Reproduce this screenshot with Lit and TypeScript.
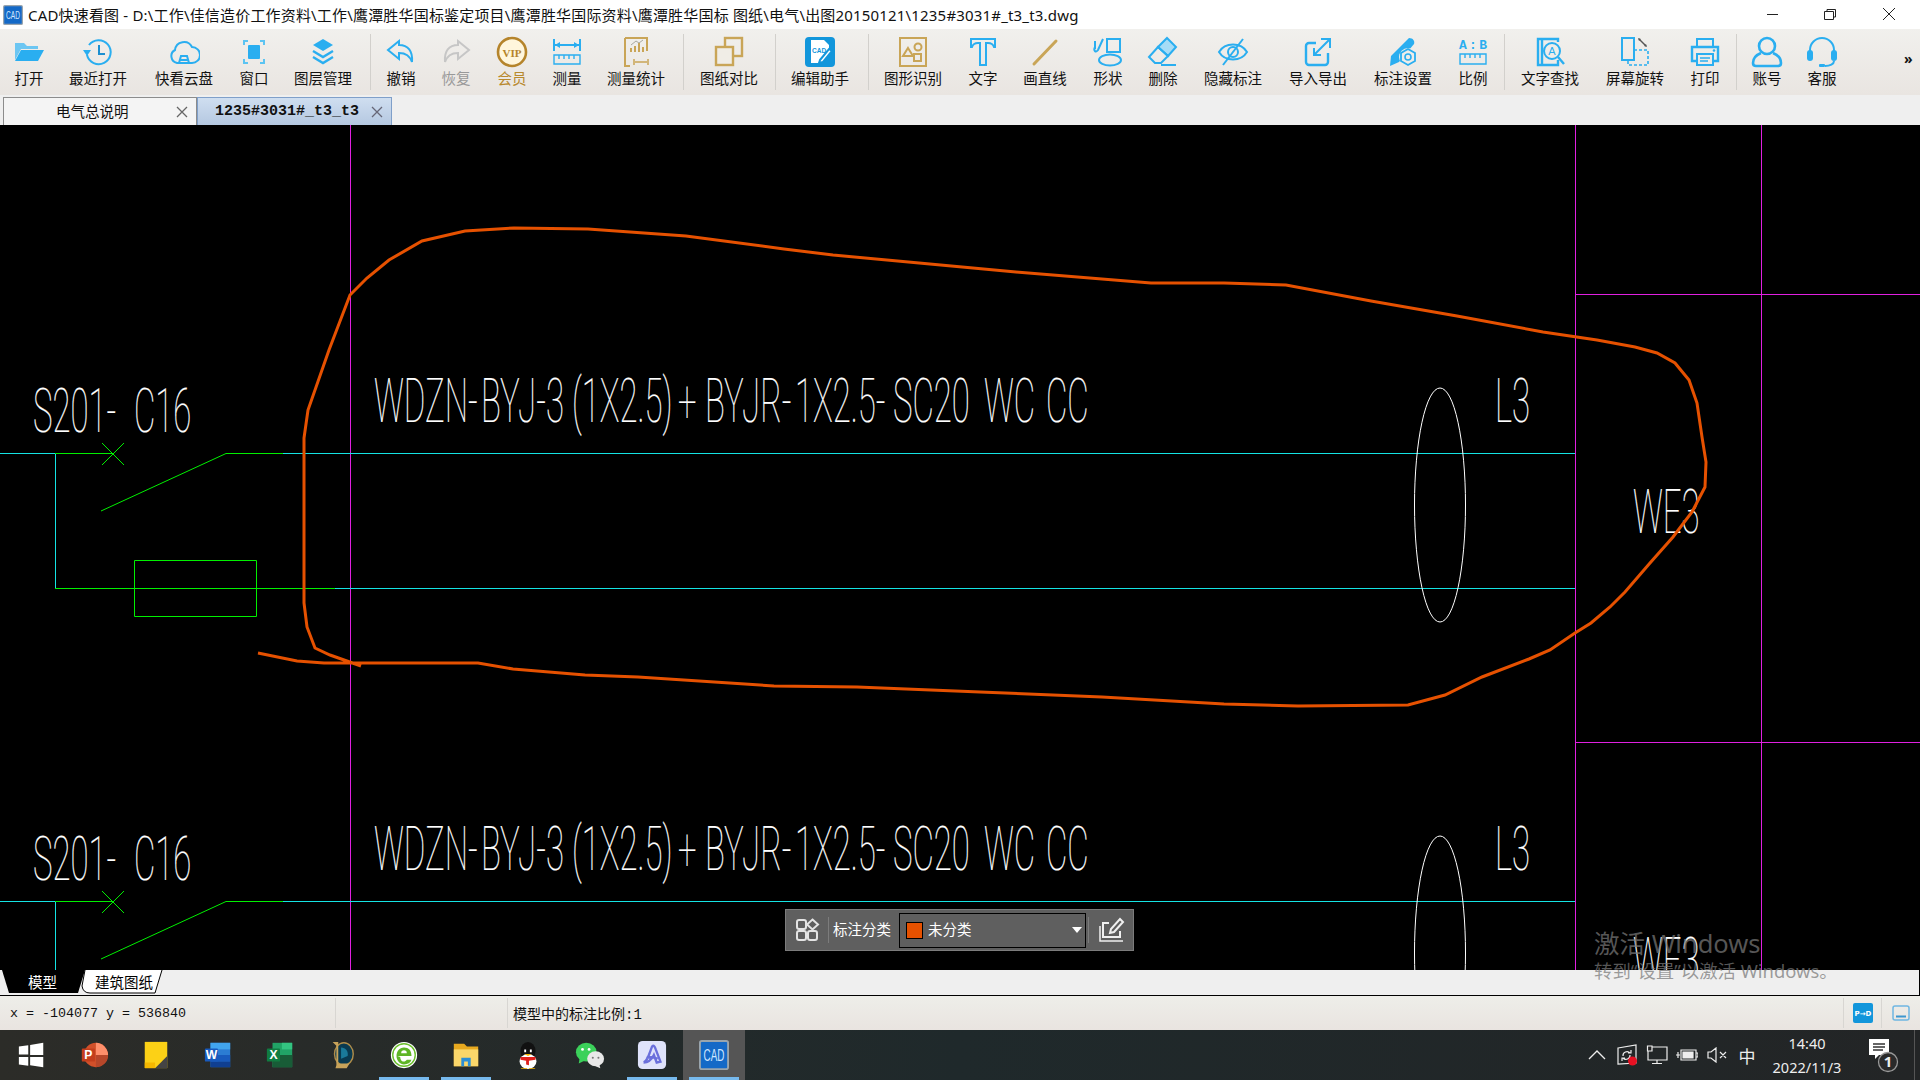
import { LitElement, html, svg, css } from 'lit';
import { customElement } from 'lit/decorators.js';

const B = '#2aaef0';
const G = '#c9a557';

const ico = (body: unknown) => html`<svg class="ico" viewBox="0 0 32 32" fill="none" stroke-width="2">${body}</svg>`;

const icons: Record<string, unknown> = {
  open: ico(svg`<path d="M2 7h9l3 3h11v3H8L2 24z" fill="#6cc6f2"/><path d="M8 14h23l-6 11H2z" fill="${B}"/>`),
  recent: ico(svg`<path d="M7 9a12 12 0 1 1-2 10" stroke="${B}"/><path d="M1 14h8l-4 6z" fill="${B}"/><path d="M17 9v9h6" stroke="#1c8fd0"/>`),
  cloud: ico(svg`<path d="M9 27a7 7 0 0 1-2-13 9 9 0 0 1 17-3 8 8 0 0 1 0 16z" stroke="${B}"/><path d="M11 27l2-7h6l2 7zM12 24h8" stroke="${B}"/>`),
  frame: ico(svg`<rect x="10" y="9" width="12" height="14" rx="1" fill="${B}"/><path d="M6 9V5h4M22 5h4v4M26 23v4h-4M10 27H6v-4" stroke="#5cc4f2"/>`),
  layers: ico(svg`<path d="M16 3l10 6-10 6-10-6z" fill="${B}"/><path d="M6 15l10 6 10-6M6 21l10 6 10-6" stroke="${B}" stroke-width="2.400"/>`),
  undo: ico(svg`<path d="M14 5L3 14l11 9v-6c7 0 11 3 13 9 1-11-4-17-13-17z" stroke="${B}"/>`),
  redo: ico(svg`<path d="M18 5l11 9-11 9v-6c-7 0-11 3-13 9-1-11 4-17 13-17z" stroke="#c6c6c6"/>`),
  vip: ico(svg`<circle cx="16" cy="16" r="14" fill="#fff6dc" stroke="#b5842b" stroke-width="2.600"/><text x="16" y="20.500" text-anchor="middle" class="vip">VIP</text>`),
  measure: ico(svg`<path d="M3 3v12M29 3v12M4 9h24" stroke="${B}"/><path d="M4 9l5-3v6zM28 9l-5-3v6z" fill="${B}"/><path d="M3 19h26v9H3zM8 19v4M13 19v4M18 19v4M23 19v4" stroke="${B}" stroke-width="1.400"/>`),
  stat: ico(svg`<path d="M5 2h22v13M5 2v28h5" stroke="${G}" stroke-width="2"/><path d="M11 16v-4M15 16v-6M19 16v-9M23 16v-5" stroke="${G}" stroke-width="2"/><path d="M11 9l5-4 3 2 4-3" stroke="#a8a8a0" stroke-width="1"/><path d="M14 23v6M28 23v6M15 26h12" stroke="${G}" stroke-width="1.500"/>`),
  compare: ico(svg`<rect x="12" y="2" width="17" height="18" stroke="${G}" stroke-width="2.400"/><rect x="3" y="11" width="17" height="18" fill="#f0ede6" stroke="${G}" stroke-width="2.400"/>`),
  helper: ico(svg`<rect x="1" y="1" width="30" height="30" rx="4" fill="#1296db"/><path d="M7 4h13l5 5v8l-8 10H7z" fill="#fff"/><text x="8" y="17" class="mini">CAD</text><path d="M16 24l9-11 3 2-9 11-4 1z" fill="#fff" stroke="#1296db"/>`),
  detect: ico(svg`<rect x="3" y="2" width="26" height="28" stroke="${G}" stroke-width="2"/><path d="M11 12l5 8H6z" stroke="${G}"/><circle cx="21" cy="11" r="3.500" stroke="${G}"/><rect x="17" y="18" width="7" height="7" stroke="${G}"/>`),
  text: ico(svg`<path d="M4 3h24v8h-1c-1-3-3-4-6-4h-2v22h-6V7h-2c-3 0-5 1-6 4H4z" stroke="${B}"/>`),
  line: ico(svg`<path d="M5 28L27 5" stroke="${G}" stroke-width="3" stroke-linecap="round"/>`),
  shape: ico(svg`<rect x="15" y="3" width="13" height="13" stroke="${B}"/><ellipse cx="18" cy="24" rx="11" ry="5.500" stroke="${B}"/><path d="M11 3l-5 11c-2 3-5 1-3-3M3 5v8" stroke="${B}"/>`),
  erase: ico(svg`<path d="M20 2l9 9-8 9-10-9z" fill="#a6dcf6" stroke="${B}"/><path d="M11 11l10 9-7 7H8l-6-6zM14 29h15" stroke="${B}"/>`),
  hide: ico(svg`<path d="M2 16c6-10 22-10 28 0-6 10-22 10-28 0z" stroke="${B}"/><circle cx="16" cy="16" r="5" stroke="${B}"/><path d="M26 3L6 29" stroke="${B}"/>`),
  io: ico(svg`<path d="M14 7H7a3 3 0 0 0-3 3v16a3 3 0 0 0 3 3h16a3 3 0 0 0 3-3v-9" stroke="${B}" stroke-width="2.400"/><path d="M19 3h9v9M28 3L13 18M12 12v7h7" stroke="${B}" stroke-width="2"/>`),
  mark: ico(svg`<path d="M22 2c4 0 6 3 5 6L12 26l-9 4 1-10z" fill="${B}"/><circle cx="21" cy="21" r="9" fill="#efede9"/><path d="M21 13l7 4v8l-7 4-7-4v-8z" stroke="${B}" stroke-width="1.800"/><circle cx="21" cy="21" r="3" stroke="${B}" stroke-width="1.600"/>`),
  ratio: ico(svg`<text x="2" y="13" textLength="28" class="ab">A:B</text><path d="M3 18h26v10H3zM8 18v4M13 18v4M18 18v4M23 18v4" stroke="${B}" stroke-width="1.400"/>`),
  find: ico(svg`<path d="M24 24v5H4V3h20v3M8 3v26" stroke="${B}" stroke-width="2.400"/><circle cx="18" cy="15" r="8" fill="#efede9" stroke="${B}"/><text x="18" y="19" text-anchor="middle" class="finda">A</text><path d="M24 21l6 7" stroke="${B}" stroke-width="2.400"/>`),
  rotate: ico(svg`<rect x="3" y="2" width="12" height="22" stroke="${B}"/><path d="M15 14h14v15H9v-5" stroke="${B}" stroke-dasharray="3 2" stroke-width="1.600"/><path d="M20 3l7 7" stroke="#555" stroke-width="1.400"/><path d="M19 2l3 1-2 2zM28 11l-3-1 2-2z" fill="#555"/>`),
  print: ico(svg`<path d="M8 11V3h16v8" stroke="${B}"/><path d="M8 25H3V11h26v14h-5" stroke="${B}" stroke-width="2.400"/><rect x="8" y="18" width="16" height="11" stroke="${B}"/><path d="M11 22h10M11 25h8" stroke="${B}" stroke-width="1.400"/><circle cx="25" cy="14.500" r="1.300" fill="${B}"/>`),
  user: ico(svg`<circle cx="16" cy="10" r="8" stroke="${B}" stroke-width="2.600"/><path d="M10 17c-5 2-8 6-8 10 0 2 1 3 3 3h22c2 0 3-1 3-3 0-4-3-8-8-10" stroke="${B}" stroke-width="2.600"/>`),
  service: ico(svg`<path d="M4 17v-3a12 12 0 0 1 24 0v3" stroke="${B}"/><rect x="1" y="14" width="6" height="11" rx="3" fill="${B}"/><rect x="25" y="14" width="6" height="11" rx="3" fill="${B}"/><path d="M28 25c0 3-4 5-9 5" stroke="${B}"/><rect x="13" y="28" width="6" height="3" rx="1" fill="${B}"/>`),
};

type Tool = { t?: string; i?: string; w: number; c?: string };

// widths keep every label centred where the reference has it
const tools: Tool[] = [
  { t: '打开', i: 'open', w: 58 },
  { t: '最近打开', i: 'recent', w: 80 },
  { t: '快看云盘', i: 'cloud', w: 92 },
  { t: '窗口', i: 'frame', w: 48 },
  { t: '图层管理', i: 'layers', w: 90 },
  { w: 5 },
  { t: '撤销', i: 'undo', w: 56 },
  { t: '恢复', i: 'redo', w: 54, c: 'off' },
  { t: '会员', i: 'vip', w: 58, c: 'gold' },
  { t: '测量', i: 'measure', w: 52 },
  { t: '测量统计', i: 'stat', w: 86 },
  { w: 8 },
  { t: '图纸对比', i: 'compare', w: 84 },
  { w: 8 },
  { t: '编辑助手', i: 'helper', w: 82 },
  { w: 14 },
  { t: '图形识别', i: 'detect', w: 76 },
  { t: '文字', i: 'text', w: 64 },
  { t: '画直线', i: 'line', w: 60 },
  { t: '形状', i: 'shape', w: 66 },
  { t: '删除', i: 'erase', w: 44 },
  { t: '隐藏标注', i: 'hide', w: 96 },
  { t: '导入导出', i: 'io', w: 74 },
  { t: '标注设置', i: 'mark', w: 96 },
  { t: '比例', i: 'ratio', w: 44 },
  { w: 18 },
  { t: '文字查找', i: 'find', w: 74 },
  { t: '屏幕旋转', i: 'rotate', w: 96 },
  { t: '打印', i: 'print', w: 44 },
  { w: 18 },
  { t: '账号', i: 'user', w: 44 },
  { t: '客服', i: 'service', w: 66 },
];

// drawing text is Roboto squeezed horizontally; each run starts at its own sheet x
const SQUEEZE = 0.54;
const cad = (y: number, parts: [number, string][]) =>
  svg`<text class="cad" transform="translate(0 ${y}) scale(${SQUEEZE} 1)" font-size="61">${parts.map(
    ([x, s]) => svg`<tspan x="${x / SQUEEZE}">${s}</tspan>`,
  )}</text>`;

// one circuit of the drawing; the sheet repeats it further down
const circuit = (dy: number) => svg`<g transform="translate(0 ${dy})">
  <path d="M0 453.500H55M283 453.500H1575M55.500 453.500V588M335 588.500H1575" stroke="#14e4e4"/>
  <path d="M55 453.500H113M102 443L124 465M124 443L102 465M101 511L226 453.500H283M55 588.500H335M134.500 560.500H256.500V616.500H134.500Z" stroke="#00f000"/>
  ${cad(432, [[33, 'S201-'], [134, 'C16']])}
  ${cad(422, [[374, 'WDZN-'], [481, 'BYJ-3'], [572, '(1X2.5)'], [678, '+'], [705, 'BYJR-'], [795, '1X2.5-'], [893, 'SC20 '], [984, 'WC '], [1046, 'CC']])}
  ${cad(422, [[1495, 'L3']])}
  <ellipse cx="1440" cy="505" rx="25.500" ry="117" stroke="#fff"/>
  ${cad(533, [[1633, 'WE3']])}
</g>`;

const loop = 'M258 653 297 661 324 663 350 663 478 663 513 669 585 675 638 677 774 686 857 687 980 692 1102 697 1224 704 1298 706 1408 705 1445 695 1482 677 1529 659 1550 650 1575 633 1591 623 1610 607 1625 592 1650 563 1673 537 1692 512 1705 487 1706 462 1702 437 1697 403 1689 380 1675 363 1657 353 1635 347 1597 340 1543 332 1457 316 1371 301 1286 285 1224 283 1151 283 1016 272 833 255 784 249 686 236 588 229 514 228 465 231 422 241 389 260 367 278 350 295 329 350 308 410 304 438 304 603 307 627 315 648 330 655 361 666';

const cadLogo = svg`<rect x="1" y="1" width="30" height="30" rx="2" fill="#1469c7" stroke="#9aa5ad" stroke-width="2"/><text transform="translate(16 22) scale(.62 1)" text-anchor="middle" class="cadlogo">CAD</text>`;

const taskApps = [
  svg`<path d="M2 7l10-1.500v10H2zM14 5.200L28 3v13H14zM2 18h10v9.500L2 26zM14 18h14v11l-14-2z" fill="#fff"/>`,
  svg`<circle cx="18" cy="16" r="13" fill="#d2502a"/><path d="M18 3a13 13 0 0 1 13 13H18z" fill="#ff8f6b"/><path d="M18 16h13a13 13 0 0 1-13 13z" fill="#b7472a"/><rect x="3" y="9" width="14" height="14" rx="1" fill="#c43e1c"/><text x="10" y="20.500" text-anchor="middle" class="appt">P</text>`,
  svg`<path d="M4 2h24v28H4z" fill="#fcd116"/><path d="M15 30l13-13v13z" fill="#444"/><path d="M4 24h11v6H4z" fill="#f5b800"/>`,
  svg`<path d="M8 3h21v26H8z" fill="#2b7cd3"/><path d="M8 3h21v7H8z" fill="#41a5ee"/><path d="M8 16h21v7H8z" fill="#185abd"/><path d="M8 23h21v6H8z" fill="#103f91"/><rect x="2" y="9" width="14" height="14" rx="1" fill="#185abd"/><text x="9" y="20.500" text-anchor="middle" class="appt">W</text>`,
  svg`<path d="M8 3h21v26H8z" fill="#21a366"/><path d="M18 3h11v7H18z" fill="#33c481"/><path d="M8 16h21v13H8z" fill="#185c37"/><rect x="2" y="9" width="14" height="14" rx="1" fill="#107c41"/><text x="9" y="20.500" text-anchor="middle" class="appt">X</text>`,
  svg`<ellipse cx="18" cy="15" rx="10" ry="12" fill="#0a3a50" stroke="#b08d4a" stroke-width="1.500"/><path d="M6 2h6v23h12l-3 5H9l1-3V6z" fill="#c8a35a"/><path d="M15 8c5 0 8 4 7 9l-7 3z" fill="#1a7a9a"/>`,
  svg`<circle cx="16" cy="16" r="14" fill="#fff"/><circle cx="16" cy="16" r="12" fill="none" stroke="#6cbf2d" stroke-width="1.500"/><path d="M9 17h15c0-6-3-9-8-9s-8 4-8 9 4 9 8 9 7-2 8-5h-5c-1 1-2 2-3 2-3 0-4-3-4-5zM13 14c0-2 1-3 3-3s3 1 3 3z" fill="#5fb526" fill-rule="evenodd"/>`,
  svg`<path d="M3 4h11l3 3h12v21H3z" fill="#e8a91f"/><path d="M3 10h26v18H3z" fill="#fbd76a"/><path d="M11 28V19h10v9h-3v-5h-4v5z" fill="#2b8fd6"/>`,
  svg`<ellipse cx="16" cy="12" rx="8" ry="10" fill="#111"/><ellipse cx="16" cy="23" rx="9" ry="8" fill="#fff"/><path d="M12 10h2v3h-2zM18 10h2v3h-2z" fill="#fff"/><path d="M12 15h8l-4 2z" fill="#f5b400"/><path d="M8 18h16v3l-7 1v5l-3-1v-4l-6-1z" fill="#e0201c"/><path d="M9 30h6v1H8zM17 30h6l1 1h-7z" fill="#f5b400"/>`,
  svg`<ellipse cx="12" cy="13" rx="11" ry="10" fill="#3bd15a"/><path d="M5 19l-1 6 6-3z" fill="#3bd15a"/><ellipse cx="22" cy="20" rx="9" ry="8" fill="#e8e8e8"/><path d="M26 26l1 4-5-2z" fill="#e8e8e8"/><circle cx="8" cy="10" r="1.500" fill="#fff"/><circle cx="15" cy="10" r="1.500" fill="#fff"/><circle cx="19" cy="19" r="1.100" fill="#777"/><circle cx="25" cy="19" r="1.100" fill="#777"/>`,
  svg`<rect x="1" y="1" width="30" height="30" rx="5" fill="#dfe3fb"/><path d="M7 24c4-1 6-9 9-17 2-2 3 0 4 3l5 13-4 1-3-8c-2 4-5 8-11 8M10 19c4-1 8-1 12 1" fill="none" stroke="#6a6fdc" stroke-width="2.500"/>`,
  cadLogo,
];

@customElement('app-root')
export class AppRoot extends LitElement {
  static styles = css`
    :host {
      display: flex;
      flex-direction: column;
      position: relative;
      width: 1920px;
      height: 1080px;
      overflow: hidden;
      background: #efefef;
      font-family: 'Noto Sans', 'Noto Sans CJK SC', sans-serif;
      font-size: 14.5px;
      color: #111;
    }
    .title {
      display: flex;
      align-items: center;
      height: 29px;
      background: #fff;
      font-size: 15px;
      letter-spacing: 0.18px;
      white-space: nowrap;
    }
    .logo { width: 20px; height: 20px; margin: 0 5px 0 3px; flex: none; }
    .win {
      margin-left: auto;
      display: flex;
    }
    .win svg { width: 59px; height: 29px; display: block; }
    .toolbar {
      display: flex;
      height: 66px;
      background: linear-gradient(#f1f0ed, #e9e5e1);
    }
    .tool {
      display: flex;
      flex-direction: column;
      align-items: center;
      flex: none;
      padding-top: 7px;
      box-sizing: border-box;
      white-space: nowrap;
    }
    .tool span { line-height: 16px; margin-top: 2px; }
    .off { color: #999; }
    .gold { color: #b8892e; }
    .ico { width: 32px; height: 32px; display: block; flex: none; }
    .sep { display: flex; justify-content: center; flex: none; padding: 5px 0; }
    .sep i { width: 1px; background: #d2d0cc; }
    .more {
      margin-left: auto;
      box-sizing: border-box;
      width: 20px;
      padding: 20px 0 0 4px;
      font-size: 14px;
      font-weight: 700;
    }
    .tabs {
      display: flex;
      align-items: flex-end;
      height: 30px;
      padding-left: 3px;
    }
    .tab {
      display: flex;
      align-items: center;
      box-sizing: border-box;
      height: 28px;
      position: relative;
      border: 1px solid #8c8c8c;
      border-bottom: none;
      background: #f4f4f4;
      width: 194px;
      padding: 0 0 3px 52px;
    }
    .tab.on {
      width: 195px;
      padding: 0 0 0 17px;
      border-color: #7f9fc9;
      background: linear-gradient(#cfdef0, #b5c8e1);
      font-family: 'Liberation Mono', monospace;
      font-size: 15px;
      font-weight: 700;
    }
    .x { position: absolute; right: 8px; top: 8px; width: 12px; height: 12px; }
    .canvas { position: relative; flex: 1; background: #000; overflow: hidden; }
    .canvas > svg { display: block; width: 1920px; height: 845px; }
    .cad {
      font-family: Roboto, 'Liberation Sans', sans-serif;
      font-weight: 100;
      fill: #fff;
      stroke: #fff;
      stroke-width: 0.25;
      white-space: pre;
    }
    .float {
      position: absolute;
      left: 785px;
      top: 784px;
      box-sizing: border-box;
      width: 349px;
      height: 42px;
      display: flex;
      align-items: center;
      background: #5f5f5f;
      border: 1px solid #7c7c7c;
      color: #fff;
    }
    .float svg { flex: none; }
    .bar { width: 1px; height: 26px; background: #7c7c7c; flex: none; }
    .float .name { margin: 0 8px 4px 4px; white-space: nowrap; }
    .select {
      display: flex;
      align-items: center;
      box-sizing: border-box;
      width: 187px;
      height: 35px;
      border: 1px solid #000;
      padding: 0 0 4px 6px;
      flex: none;
      position: relative;
      margin-right: 2px;
    }
    .swatch {
      width: 17px;
      height: 17px;
      box-sizing: border-box;
      background: #e65100;
      border: 1px solid #000;
      margin: 4px 5px 0 0;
    }
    .caret {
      position: absolute;
      right: 3px;
      top: 13px;
      width: 0;
      height: 0;
      border: 5px solid transparent;
      border-top: 6px solid #fff;
      border-bottom: none;
    }
    .sheets {
      height: 25px;
      background: #efefef;
      border-bottom: 1px solid #000;
      border-right: 1px solid #000;
    }
    .sheets svg { display: block; }
    .sheets text { font-size: 14.5px; font-family: 'Noto Sans CJK SC', sans-serif; }
    .status {
      display: flex;
      align-items: center;
      height: 34px;
      background: linear-gradient(#eeeee9, #e9e4e0);
      font-family: 'Liberation Mono', 'Noto Sans CJK SC', monospace;
      font-size: 13.33px;
    }
    .cell { display: flex; align-items: center; height: 30px; flex: none; box-sizing: border-box; border-right: 1px solid #d8d6d2; }
    .coords { width: 336px; padding-left: 10px; }
    .blank { width: 172px; }
    .hint { flex: 1; padding-left: 5px; border: none; font-size: 14px; }
    .pd { width: 39px; justify-content: center; border-left: 1px solid #d8d6d2; border-right: 1px solid #d8d6d2; }
    .pd text { font: 700 7px 'DejaVu Sans', sans-serif; fill: #fff; }
    .dock { width: 38px; justify-content: center; border: none; }
    .taskbar {
      display: flex;
      height: 50px;
      align-items: stretch;
      background: linear-gradient(90deg, #2c2c28, #1f292b 50%, #232526);
      color: #eee;
    }
    .app { width: 62px; flex: none; display: flex; align-items: center; justify-content: center; position: relative; }
    .app:first-child { width: 63px; }
    .app svg { width: 30px; height: 30px; }
    .app.open::after {
      content: '';
      position: absolute;
      left: 6px;
      right: 6px;
      bottom: 0;
      height: 3px;
      background: #76b9ed;
    }
    .app.active { background: #555; }
    .appt { font: 700 13px 'Liberation Sans', sans-serif; fill: #fff; stroke: none; }
    .cadlogo { font: 400 17px 'Liberation Sans', sans-serif; fill: #cfe6ff; stroke: none; }
    .vip { font: 700 11px 'Liberation Serif', serif; fill: #b5842b; stroke: none; }
    .mini { font: 700 6.5px 'Liberation Sans', sans-serif; fill: #1296db; stroke: none; }
    .ab { font: 700 13px 'Liberation Mono', monospace; fill: #2aaef0; stroke: none; }
    .finda { font: 400 11px 'Liberation Sans', sans-serif; fill: #2aaef0; stroke: none; }
    .tray { margin-left: auto; display: flex; align-items: center; }
    .tray svg { display: block; flex: none; }
    .zh { width: 30px; margin-left: 5px; text-align: center; font-size: 17px; }
    .clock { width: 90px; margin-right: 12px; text-align: center; font-size: 14.5px; line-height: 24px; }
    .notify { width: 50px; display: flex; padding-left: 1px; box-sizing: border-box; }
    .edge { width: 1px; height: 50px; background: #555; margin-right: 5px; }
    .mark {
      position: absolute;
      left: 1594px;
      top: 926px;
      color: rgba(120, 120, 120, 0.72);
      white-space: nowrap;
      pointer-events: none;
    }
    .mark div:first-child { font-size: 25.5px; line-height: 34px; }
    .mark div:last-child { font-size: 18.4px; line-height: 21px; }
  `;

  render() {
    return html`
      <div class="title">
        <svg class="logo" viewBox="0 0 32 32">${cadLogo}</svg>
        <span>CAD快速看图 - D:\\工作\\佳信造价工作资料\\工作\\鹰潭胜华国标鉴定项目\\鹰潭胜华国际资料\\鹰潭胜华国标 图纸\\电气\\出图20150121\\1235#3031#_t3_t3.dwg</span>
        <div class="win">
          <svg viewBox="0 0 59 29" fill="none" stroke="#222"><path d="M24 14.500H35"/></svg>
          <svg viewBox="0 0 59 29" fill="none" stroke="#222"><path d="M22.500 11.500H31.500V19.500H22.500ZM25 11V9.500H33.500V17H31.500"/></svg>
          <svg viewBox="0 0 59 29" fill="none" stroke="#222"><path d="M22 8L34 20M34 8L22 20"/></svg>
        </div>
      </div>
      <div class="toolbar">
        ${tools.map((t) =>
          t.t
            ? html`<div class="tool ${t.c ?? ''}" style="width:${t.w}px">${icons[t.i!]}<span>${t.t}</span></div>`
            : html`<div class="sep" style="width:${t.w}px"><i></i></div>`,
        )}
        <div class="more">»</div>
      </div>
      <div class="tabs">
        <div class="tab">电气总说明<svg class="x" viewBox="0 0 12 12" stroke="#666" stroke-width="1.300"><path d="M1 1L11 11M11 1L1 11"/></svg></div>
        <div class="tab on">1235#3031#_t3_t3<svg class="x" viewBox="0 0 12 12" stroke="#667" stroke-width="1.300"><path d="M1 1L11 11M11 1L1 11"/></svg></div>
      </div>
      <div class="canvas">
        <svg viewBox="0 125 1920 845" fill="none" stroke-width="1">
          <path d="M350.500 125V970M1575.500 125V970M1761.500 125V970M1575 294.500H1920M1575 742.500H1920" stroke="#e020e0"/>
          ${circuit(0)}
          ${circuit(448)}
          <path d="${loop}" stroke="#e65100" stroke-width="3"/>
        </svg>
        <div class="float">
          <svg width="42" height="24" viewBox="0 0 42 24" fill="none" stroke="#e4e4e4" stroke-width="2"><rect x="11" y="2" width="9" height="9" rx="2"/><rect x="11" y="13" width="9" height="9" rx="2"/><rect x="22" y="13" width="9" height="9" rx="2"/><path d="M26.500 1.500L32 6.500L26.500 11.500L21 6.500Z"/></svg>
          <div class="bar"></div>
          <span class="name">标注分类</span>
          <div class="select"><div class="swatch"></div>未分类<div class="caret"></div></div>
          <div class="bar"></div>
          <svg width="44" height="26" viewBox="0 0 44 26" fill="none" stroke="#f0f0f0" stroke-width="2"><path d="M20 6H14V20H31V14"/><path d="M11 9V24H34" stroke-width="1.500"/><path d="M21 16L22 12L31 2L34 5L25 15Z"/></svg>
        </div>
      </div>
      <div class="sheets">
        <svg width="170" height="25" viewBox="0 0 170 25">
          <path d="M2 0L9 23H78L85 0Z" fill="#000"/>
          <path d="M85 0L82 16Q83 23 90 23H155L162 0" fill="#fff" stroke="#000"/>
          <text x="28" y="18" fill="#fff">模型</text>
          <text x="95" y="18" fill="#000">建筑图纸</text>
        </svg>
      </div>
      <div class="status">
        <div class="cell coords">x = -104077 y = 536840</div>
        <div class="cell blank"></div>
        <div class="cell hint">模型中的标注比例:1</div>
        <div class="cell pd"><svg width="20" height="20" viewBox="0 0 20 20"><rect width="20" height="20" rx="2" fill="#1296db"/><text x="10" y="13" text-anchor="middle">P→D</text></svg></div>
        <div class="cell dock"><svg width="18" height="16" viewBox="0 0 18 16" fill="none"><rect x="1" y="1" width="16" height="14" rx="2" stroke="#6fb7e2" stroke-width="1.500"/><path d="M4 11.500H14" stroke="#3d97cf" stroke-width="2"/></svg></div>
      </div>
      <div class="taskbar">
        ${taskApps.map((a, i) => {
          const cls = [6, 7, 10, 11].includes(i) ? 'open' : '';
          return html`<div class="app ${cls} ${i === 11 ? 'active' : ''}"><svg viewBox="0 0 32 32">${a}</svg></div>`;
        })}
        <div class="tray">
          <svg width="20" height="12" viewBox="0 0 20 12" fill="none" stroke="#eee" stroke-width="1.300"><path d="M2 10L10 2L18 10"/></svg>
          <svg style="margin-left:9px" width="22" height="22" viewBox="0 0 22 22" fill="none" stroke="#eee" stroke-width="1.200"><path d="M2 4L20 1V19L2 20Z"/><path d="M7 12a4 4 0 0 1 7-3M14 11a4 4 0 0 1-7 3M12 9h3V6M9 14H6v3"/><circle cx="16.500" cy="17" r="4.500" fill="#e81123" stroke="none"/></svg>
          <svg style="margin-left:8px" width="22" height="20" viewBox="0 0 22 20" fill="none" stroke="#eee" stroke-width="1.200"><path d="M2 2H21V15H2ZM11 15V18M6 18.500H16"/><path d="M1.500 1H6V6H1.500Z" fill="#222"/></svg>
          <svg style="margin-left:8px" width="22" height="16" viewBox="0 0 22 16" fill="none" stroke="#eee" stroke-width="1.200"><path d="M5 3H20V13H5ZM20 6H22V10H20ZM0 8H4M2 5V11"/><path d="M7 5H17V11H7Z" fill="#eee"/></svg>
          <svg style="margin-left:9px" width="20" height="16" viewBox="0 0 20 16" fill="none" stroke="#eee" stroke-width="1.200"><path d="M1 5H4L9 1V15L4 11H1ZM13 5L19 11M19 5L13 11"/></svg>
          <div class="zh">中</div>
          <div class="clock">14:40<br />2022/11/3</div>
          <div class="notify"><svg width="34" height="36" viewBox="0 0 34 36"><path d="M4 2H24V18H14L10 22V18H4Z" fill="#fff"/><path d="M8 7H20M8 10H20M8 13H18" stroke="#333" stroke-width="1.300"/><circle cx="23" cy="25" r="9.500" fill="#2a2a2a" stroke="#999" stroke-width="1.300"/><text x="23" y="30" text-anchor="middle" font-size="15" font-weight="700" fill="#eee" font-family="Noto Sans">1</text></svg></div>
          <div class="edge"></div>
        </div>
      </div>
      <div class="mark"><div>激活 Windows</div><div>转到“设置”以激活 Windows。</div></div>
    `;
  }
}
